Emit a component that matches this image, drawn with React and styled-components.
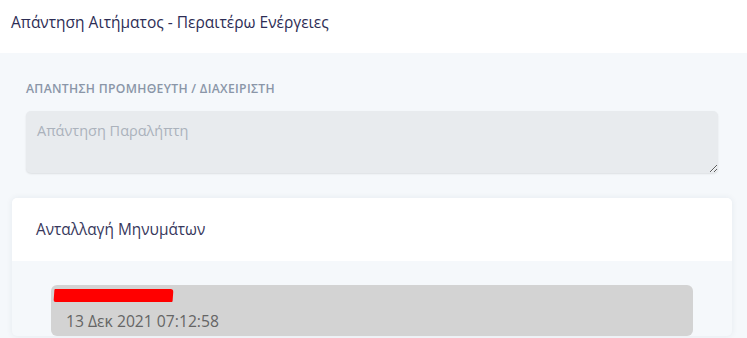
import React from 'react';
import styled, { createGlobalStyle } from 'styled-components';

const GlobalStyle = createGlobalStyle`
  body {
    margin: 0;
    background: #f5f8fb;
    font-family: "Open Sans", "Noto Sans", sans-serif;
  }
`;

const Page = styled.div`
  width: 747px;
  height: 338px;
  overflow: hidden;
  background: #f5f8fb;
`;

const Header = styled.div`
  height: 53px;
  background: #fff;
  padding: 11px 11px 0;
  box-sizing: border-box;
  font-size: 15.5px;
  line-height: 22px;
  color: #2d2d55;
`;

const Section = styled.div`
  padding: 28px 29px 0 26px;
`;

const Label = styled.div`
  font-size: 12.2px;
  line-height: 16px;
  font-weight: 600;
  letter-spacing: 0.3px;
  color: #8a96a8;
  text-transform: uppercase;
  margin-bottom: 14px;
`;

const TextArea = styled.textarea`
  display: block;
  width: 100%;
  height: 62px;
  box-sizing: border-box;
  border: none;
  border-radius: 5px;
  background: #e8ebee;
  box-shadow: 0 1px 2px rgba(0, 0, 0, 0.1);
  padding: 10px 11px;
  font-family: inherit;
  font-size: 14.5px;
  line-height: 20px;
  color: #333;
  outline: none;

  &::placeholder {
    color: #abb2bc;
  }
`;

const Card = styled.div`
  margin: 25px 15px 0 12px;
  background: #f5f8fb;
  border-radius: 5px;
  box-shadow: 0 0 6px rgba(40, 60, 90, 0.08);
  overflow: hidden;
`;

const CardHead = styled.div`
  height: 63px;
  background: #fff;
  display: flex;
  align-items: center;
  padding: 0 24px;
  font-size: 15.4px;
  color: #38385c;
`;

const CardBody = styled.div`
  padding: 24px 39px 0 39px;
`;

const Bubble = styled.div`
  background: #d3d3d3;
  border-radius: 6px;
  padding: 4px 15px 0 3px;
  height: 51px;
  box-sizing: border-box;
`;

const Redacted = styled.div`
  width: 119px;
  height: 13px;
  background: #ff0000;
  margin-bottom: 9px;
  border-radius: 1px 3px 1px 2px;
  transform: skewX(-4deg);
`;

const Stamp = styled.div`
  padding-left: 12px;
  font-size: 15.7px;
  line-height: 20px;
  color: #656565;
`;

export default function App() {
  return (
    <Page>
      <GlobalStyle />
      <Header>Απάντηση Αιτήματος - Περαιτέρω Ενέργειες</Header>
      <Section>
        <Label>Απαντηση Προμηθευτη / Διαχειριστη</Label>
        <TextArea placeholder="Απάντηση Παραλήπτη" />
      </Section>
      <Card>
        <CardHead>Ανταλλαγή Μηνυμάτων</CardHead>
        <CardBody>
          <Bubble>
            <Redacted />
            <Stamp>13 Δεκ 2021 07:12:58</Stamp>
          </Bubble>
        </CardBody>
      </Card>
    </Page>
  );
}
